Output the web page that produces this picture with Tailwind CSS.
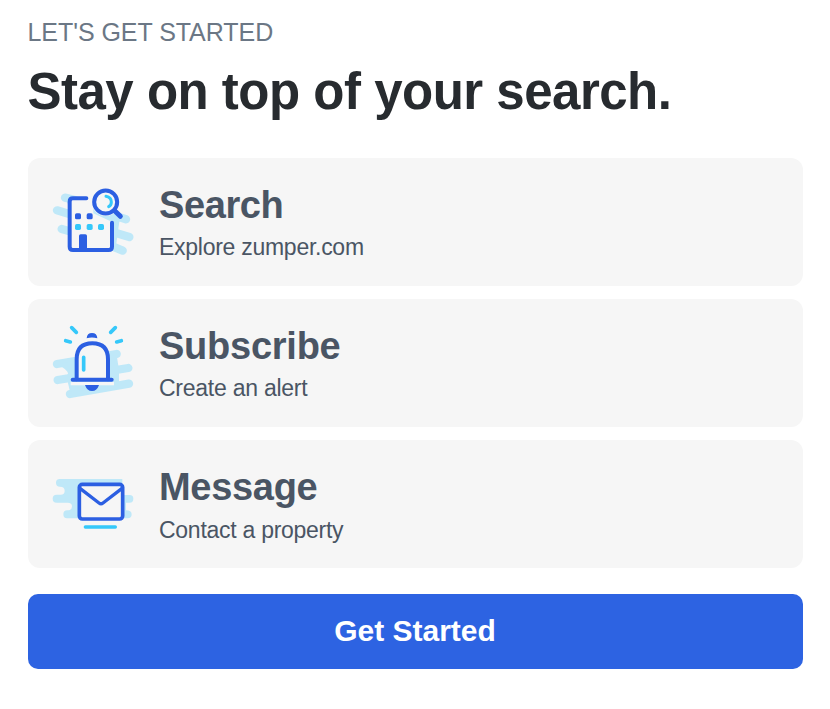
<!DOCTYPE html>
<html lang="en">
<head>
    <meta charset="UTF-8">
    <meta name="viewport" content="width=device-width, initial-scale=1.0">
    <script src="https://cdn.jsdelivr.net/npm/@tailwindcss/browser@4"></script>
    <title>Get Started</title>
</head>
<body class="bg-white font-['Liberation_Sans',Arial,sans-serif]">
    <main class="px-[27.5px] pt-4">
        <p class="text-[25px] leading-8 tracking-[-0.05px] text-[#6b7785]">LET'S GET STARTED</p>
        <h1 class="mt-3.5 text-[51px] leading-[60px] font-bold tracking-[-0.5px] text-[#272b2f] whitespace-nowrap">Stay on top of your search.</h1>

        <!-- Options -->
        <div class="mt-[35.5px] flex flex-col gap-[13px]">
            <a href="#" class="flex h-[128.3px] items-start rounded-xl bg-[#f6f6f6] pl-[17.5px]">
                <svg class="mt-[22.5px] h-20 w-[95px] shrink-0" viewBox="0 0 285 240" fill="none" stroke-linecap="round" stroke-linejoin="round">
                    <path d="M60 53L90 60M36 91L90 107M50 147L90 158M205 106L243 118M190 152L253 171M195 196L233 212" stroke="#bfe8f8" stroke-width="25"/>
                    <path d="M60 51L185 85L225 110L212 205L80 205V100z" fill="#bfe8f8"/>
                    <path d="M74 55H145V100L200 125V210H82Q74 210 74 200z" fill="#f6f6f6"/>
                    <path d="M124 55H84Q74 55 74 65V200Q74 210 84 210H191Q201 210 201 200V128" stroke="#2c5fe2" stroke-width="12"/>
                    <circle cx="182" cy="66" r="42" fill="#f6f6f6"/>
                    <circle cx="182" cy="66" r="34.5" fill="#f6f6f6" stroke="#2c5fe2" stroke-width="12"/>
                    <path d="M209 92L226 109" stroke="#2c5fe2" stroke-width="15"/>
                    <path d="M183 49Q199 52 199 66Q199 76 191 80" stroke="#35c8fa" stroke-width="9"/>
                    <path d="M102 212V168Q102 163 107 163H121Q126 163 126 168V212z" fill="#2c5fe2"/>
                    <g fill="#2c5fe2">
                        <rect x="90" y="100" width="18" height="18" rx="5"/>
                        <rect x="125" y="100" width="18" height="18" rx="5"/>
                    </g>
                    <g fill="#35c8fa">
                        <rect x="90" y="132" width="18" height="18" rx="5"/>
                        <rect x="125" y="132" width="18" height="18" rx="5"/>
                        <rect x="159" y="132" width="18" height="18" rx="5"/>
                    </g>
                </svg>
                <div class="pt-[26px] pl-[19px] text-[#4a5564]">
                    <h2 class="text-[38px] leading-[42px] font-bold tracking-[-0.4px]">Search</h2>
                    <p class="mt-[7px] text-[23px] leading-7 tracking-[-0.27px]">Explore zumper.com</p>
                </div>
            </a>
            <a href="#" class="flex h-[128.3px] items-start rounded-xl bg-[#f6f6f6] pl-[17.5px]">
                <svg class="mt-[21.2px] h-[85px] w-[95px] shrink-0" viewBox="0 0 285 255" fill="none" stroke-linecap="round" stroke-linejoin="round">
                    <path d="M36 132L215 102M38 180L75 174M75 222L252 191M75 172L250 144" stroke="#bfe8f8" stroke-width="25"/>
                    <path d="M52 130L215 105L222 150V195L75 215L66 176Q74 164 66 154Q60 146 52 142z" fill="#bfe8f8"/>
                    <path d="M77 191H207" stroke="#f6f6f6" stroke-width="10" stroke-linecap="butt"/>
                    <path d="M95 178V118Q95 70 142 70Q189 70 189 118V178" fill="#f6f6f6" stroke="#2c5fe2" stroke-width="12"/>
                    <path d="M83 179H200" stroke="#2c5fe2" stroke-width="12"/>
                    <path d="M125 55Q126 39 141 39Q156 39 157 55Q141 50 125 55z" fill="#2c5fe2"/>
                    <path d="M120 195H162Q156 213 141 213Q126 213 120 195z" fill="#2c5fe2"/>
                    <path d="M116 112V150M80 23L94 37M211 23L197 37M62 62L76 66M229 62L215 66" stroke="#35c8fa" stroke-width="11"/>
                </svg>
                <div class="pt-[26px] pl-[19px] text-[#4a5564]">
                    <h2 class="text-[38px] leading-[42px] font-bold tracking-[-0.25px]">Subscribe</h2>
                    <p class="mt-[7px] text-[23px] leading-7 tracking-[-0.25px]">Create an alert</p>
                </div>
            </a>
            <a href="#" class="flex h-[128.3px] items-start rounded-xl bg-[#f6f6f6] pl-[17.5px]">
                <svg class="mt-[24.9px] h-[75px] w-[95px] shrink-0" viewBox="0 0 285 225" fill="none" stroke-linecap="round" stroke-linejoin="round">
                    <path d="M44 42H232V160H66Q55 160 55 148Q55 136 67 136Q81 136 81 124Q81 113 68 113H35Q23 113 23 101Q23 89 35 89H47Q59 89 59 77Q59 65 45 65Q33 65 33 53Q33 42 44 42z" fill="#bfe8f8"/>
                    <path d="M235 90H254Q265 90 265 101Q265 113 254 113H243V136Q260 136 260 148Q260 160 248 160H230z" fill="#bfe8f8"/>
                    <rect x="103" y="58" width="130" height="104" rx="9" fill="#f6f6f6" stroke="#2c5fe2" stroke-width="11"/>
                    <path d="M105 70L162 114Q168 119 174 114L231 70" stroke="#2c5fe2" stroke-width="10"/>
                    <path d="M121 186H211" stroke="#35c8fa" stroke-width="10"/>
                </svg>
                <div class="pt-[26px] pl-[19px] text-[#4a5564]">
                    <h2 class="text-[38px] leading-[42px] font-bold tracking-[-0.3px]">Message</h2>
                    <p class="mt-2 text-[23px] leading-7 tracking-[-0.27px]">Contact a property</p>
                </div>
            </a>
        </div>

        <button class="mt-[25.6px] block h-[75px] w-full rounded-[10px] bg-[#2d63e2] pb-[2px] text-[30px] font-bold text-white">Get Started</button>
    </main>
</body>
</html>
